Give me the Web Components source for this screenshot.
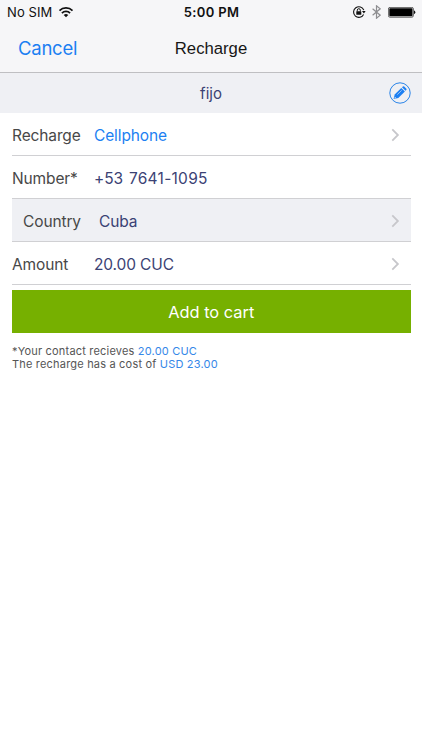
<!DOCTYPE html>
<html lang="en">
<head>
<meta charset="utf-8">
<meta name="viewport" content="width=device-width, initial-scale=1">
<title>Recharge</title>
<style>
    html, body {
        margin: 0;
        height: 100%;
        background: #fff;
        overflow: hidden;
    }
    body {
        font-family: Inter, "Liberation Sans", sans-serif;
        --blue: #1c7ff2;
        --navy: #3b4274;
        --text: #484848;
        --line: #d0d0d3;
        --band: #eff0f4;
    }
</style>
</head>
<body>
<recharge-screen></recharge-screen>

<script>
class BaseElement extends HTMLElement {
    constructor() {
        super();
        this.attachShadow({ mode: "open" });
        this.shadowRoot.innerHTML = this.constructor.markup;
    }
}

class StatusBar extends BaseElement {
    static markup = `
        <style>
            :host {
                display: grid;
                grid-template-columns: 1fr auto 1fr;
                align-items: center;
                height: 24px;
                padding: 0 6px 0 7px;
                font-size: 13px;
                line-height: 24px;
                color: #111;
            }
            .left, .right { display: flex; align-items: center; }
            .left { gap: 6px; }
            .carrier { letter-spacing: 0.1px; }
            .time { font-weight: 600; letter-spacing: 0.35px; }
            .right { justify-content: flex-end; }
            svg { display: block; }
            .bt { margin: 0 7px 0 6px; }
        </style>
        <div class="left">
            <span class="carrier">No SIM</span>
            <svg width="16" height="12" viewBox="0 0 16 12" fill="none" stroke="#111" stroke-width="1.7">
                <path d="M1.5 4.6a9.2 9.2 0 0 1 13 0"/>
                <path d="M3.9 7.1a5.8 5.8 0 0 1 8.2 0"/>
                <path d="M8 11.3 5.7 9a3.3 3.3 0 0 1 4.6 0z" fill="#111" stroke="none"/>
            </svg>
        </div>
        <span class="time">5:00 PM</span>
        <div class="right">
            <svg width="14" height="14" viewBox="0 0 14 14" fill="none" stroke="#111">
                <path d="M11.6 9.4A5.3 5.3 0 1 1 11.8 5.1" stroke-width="1.1"/>
                <path d="M10 6.1h3.6l-1.7 2.3z" fill="#111" stroke="none"/>
                <rect x="4.3" y="6.2" width="5" height="3.6" rx=".4" fill="#111" stroke="none"/>
                <path d="M5.3 6.4V5.2a1.5 1.5 0 0 1 3 0v1.2" stroke-width="1"/>
            </svg>
            <svg class="bt" width="9" height="14" viewBox="0 0 9 14" fill="none" stroke="#8e8e91" stroke-width="1.2">
                <path d="M.6 3.8 8.2 10.2 4.5 13.2V.8L8.2 3.8.6 10.2"/>
            </svg>
            <svg width="28" height="11" viewBox="0 0 28 11">
                <rect x=".4" y=".4" width="25" height="9.8" rx="1.6" fill="none" stroke="#222" stroke-width=".7"/>
                <rect x="1.3" y="1.3" width="23.2" height="8" rx=".8" fill="#000"/>
                <path d="M26 3.5q1.3.3 1.3 1.8T26 7.1z" fill="#111"/>
            </svg>
        </div>
    `;
}
customElements.define("status-bar", StatusBar);

class NavBar extends BaseElement {
    static markup = `
        <style>
            :host {
                display: grid;
                grid-template-columns: 1fr auto 1fr;
                align-items: center;
                box-sizing: border-box;
                height: 49px;
                padding: 0 18px;
                border-bottom: 1px solid #bfbfc2;
            }
            .back {
                padding-bottom: 1px;
                font-size: 18.5px;
                letter-spacing: -0.25px;
                color: var(--blue);
            }
            .title {
                padding-top: 1px;
                font-family: "Liberation Sans", sans-serif;
                font-size: 16.7px;
                color: #161616;
            }
        </style>
        <span class="back"><slot name="back"></slot></span>
        <span class="title"><slot></slot></span>
    `;
}
customElements.define("nav-bar", NavBar);

class ContactBand extends BaseElement {
    static markup = `
        <style>
            :host {
                display: grid;
                grid-template-columns: 1fr auto 1fr;
                align-items: center;
                height: 40px;
                padding: 0 11px;
                background: var(--band);
                font-size: 15px;
                color: var(--navy);
            }
            .name { grid-column: 2; }
            svg { display: block; justify-self: end; }
        </style>
        <span class="name"><slot></slot></span>
        <svg width="22" height="22" viewBox="0 0 22 22">
            <circle cx="11" cy="11" r="10.2" fill="none" stroke="#2a84e8" stroke-width="1"/>
            <g fill="#1c7ff2">
                <path d="M4.6 17 5.7 12.4l6.6-6.5 3.6 3.6-6.6 6.5z"/>
                <path d="m13 5.2.9-.8q.7-.5 1.3.1l2.2 2.2q.5.7-.1 1.3l-.8.8z"/>
            </g>
            <path d="m8.3 12.6 4.4-4.3" stroke="#eff0f4" stroke-width=".6"/>
            <path d="m5.9 14.8 1.2 1.2-1.6.4z" fill="#eff0f4"/>
        </svg>
    `;
}
customElements.define("contact-band", ContactBand);

class FieldRow extends BaseElement {
    static markup = `
        <style>
            :host {
                display: grid;
                grid-template-columns: 82px 1fr auto;
                align-items: center;
                box-sizing: border-box;
                height: 43px;
                padding: 2px 11px 0 0;
                border-bottom: 1px solid var(--line);
                font-size: 15.5px;
                line-height: 20px;
                letter-spacing: -0.12px;
                color: var(--navy);
            }
            :host([shaded]) {
                grid-template-columns: 76px 1fr auto;
                padding-left: 11px;
                background: var(--band);
            }
            :host([link]) { color: var(--blue); }
            .label { color: var(--text); }
            .label, .value { padding-top: 1px; }
            .value { display: flex; gap: 6px; }
            ::slotted(.digits) { letter-spacing: 0.27px; }
            svg { display: none; }
            :host([chevron]) svg { display: block; }
        </style>
        <span class="label"><slot name="label"></slot></span>
        <span class="value"><slot></slot></span>
        <svg width="9" height="14" viewBox="0 0 9 14" fill="none" stroke="#c7c7cb" stroke-width="1.8">
            <path d="m1.3 1.4 5.6 5.6-5.6 5.6"/>
        </svg>
    `;
}
customElements.define("field-row", FieldRow);

class CartButton extends BaseElement {
    static markup = `
        <style>
            :host { display: block; }
            button {
                display: block;
                width: 100%;
                height: 43px;
                padding: 1px 0 0;
                border: 0;
                background: #76b000;
                color: #fff;
                font: 16.4px/43px Inter, "Liberation Sans", sans-serif;
                cursor: pointer;
            }
        </style>
        <button type="button"><slot></slot></button>
    `;
}
customElements.define("cart-button", CartButton);

class CostNote extends BaseElement {
    static markup = `
        <style>
            :host {
                display: block;
                font-size: 11px;
                line-height: 13px;
                letter-spacing: 0.19px;
                color: #555;
            }
            div { white-space: nowrap; }
            ::slotted(b) { font-weight: 400; color: #3487e8; }
        </style>
        <div>*Your contact recieves <slot name="amount"></slot></div>
        <div class="cost">The recharge has a cost of <slot name="cost"></slot></div>
    `;
}
customElements.define("cost-note", CostNote);

class RechargeScreen extends BaseElement {
    static markup = `
        <style>
            :host { display: block; }
            header { background: #f6f6f8; }
            main { padding: 0 11.5px 0 12px; }
            cart-button { margin-top: 5px; }
            cost-note { margin-top: 12px; }
        </style>
        <header>
            <status-bar></status-bar>
            <nav-bar><span slot="back">Cancel</span>Recharge</nav-bar>
        </header>
        <contact-band>fijo</contact-band>
        <main>
            <field-row link chevron><span slot="label">Recharge</span>Cellphone</field-row>
            <field-row><span slot="label">Number*</span><span>+53</span><span class="digits">7641-1095</span></field-row>
            <field-row shaded chevron><span slot="label">Country</span>Cuba</field-row>
            <field-row chevron><span slot="label">Amount</span>20.00 CUC</field-row>
            <cart-button>Add to cart</cart-button>
            <cost-note><b slot="amount">20.00 CUC</b><b slot="cost">USD 23.00</b></cost-note>
        </main>
    `;
}
customElements.define("recharge-screen", RechargeScreen);
</script>
</body>
</html>
